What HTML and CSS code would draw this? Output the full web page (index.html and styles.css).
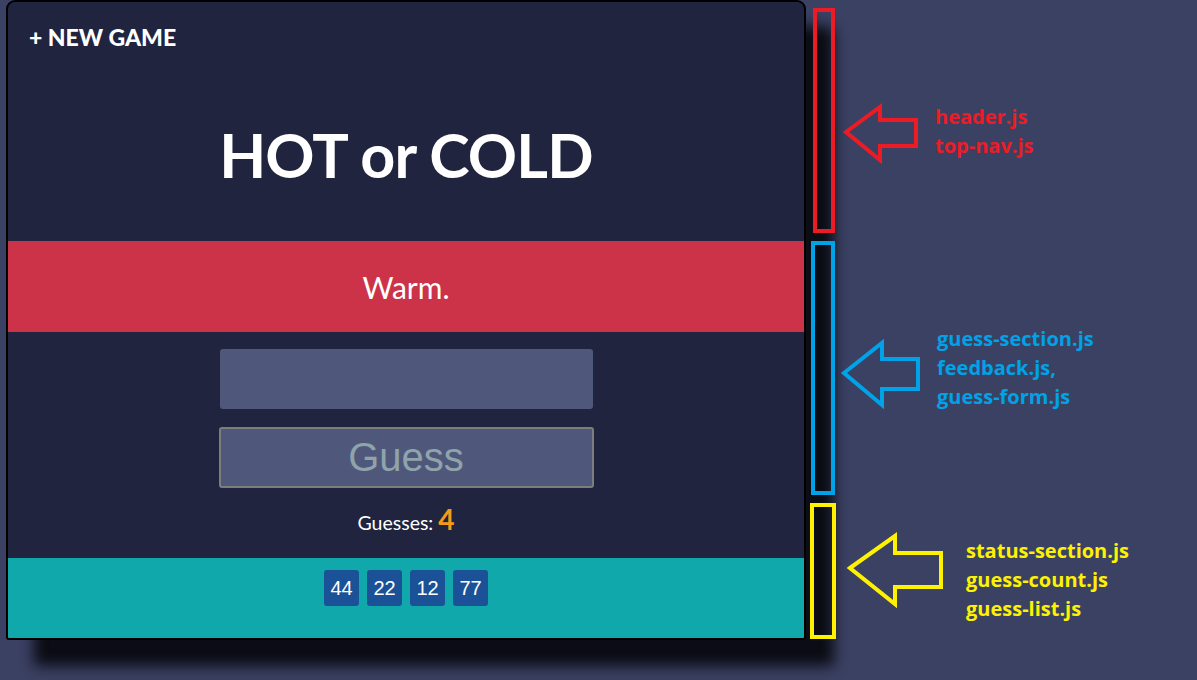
FILE: index.html
```html
<!DOCTYPE html>
<html>
<head>
<meta charset="utf-8">
<link rel="stylesheet" href="styles.css">
</head>
<body>
<div class="page">
  <main class="card">
    <header class="header">
      <nav class="top-nav"><a class="new-game">+ NEW GAME</a></nav>
      <h1 class="title">HOT or COLD</h1>
    </header>
    <section class="feedback">Warm.</section>
    <section class="guess-form">
      <input class="guess-input" type="text">
      <button class="guess-button">Guess</button>
      <p class="guess-count">Guesses: <span class="count-num">4</span></p>
    </section>
    <section class="status">
      <ul class="guess-list">
        <li class="guess-item">44</li>
        <li class="guess-item">22</li>
        <li class="guess-item">12</li>
        <li class="guess-item">77</li>
      </ul>
    </section>
  </main>

  <div class="note-box box-red"></div>
  <svg class="arrow arrow-red" width="80" height="62" viewBox="0 0 80 62"><polygon points="3,28 37,3 37,16 73,16 73,42 37,42 37,56" fill="none" stroke="#ed1c24" stroke-width="4" stroke-linejoin="miter"/></svg>
  <div class="note-text text-red">header.js<br>top-nav.js</div>

  <div class="note-box box-blue"></div>
  <svg class="arrow arrow-blue" width="84" height="70" viewBox="0 0 84 70"><polygon points="3,33 41,3 41,19 77,19 77,49 41,49 41,65" fill="none" stroke="#00a2e8" stroke-width="4"/></svg>
  <div class="note-text text-blue">guess-section.js<br>feedback.js,<br>guess-form.js</div>

  <div class="note-box box-yellow"></div>
  <svg class="arrow arrow-yellow" width="100" height="74" viewBox="0 0 100 74"><polygon points="3,35 48,3 48,20 94,20 94,54 48,54 48,71" fill="none" stroke="#fff200" stroke-width="4"/></svg>
  <div class="note-text text-yellow">status-section.js<br>guess-count.js<br>guess-list.js</div>
</div>
</body>
</html>
```

FILE: styles.css
```css
html, body {
  margin: 0;
  padding: 0;
  background: #3b4163;
  width: 1197px;
  height: 680px;
  overflow: hidden;
}

.page {
  position: relative;
  width: 1197px;
  height: 680px;
  padding-left: 6px;
  box-sizing: border-box;
}

.card {
  width: 800px;
  height: 640px;
  box-sizing: border-box;
  border: 2px solid #000;
  border-radius: 9px 9px 3px 3px;
  background: #20243e;
  box-shadow: 28px 26px 14px rgba(8, 10, 16, 0.95);
  display: flex;
  flex-direction: column;
  overflow: hidden;
  font-family: Lato, "Noto Sans", sans-serif;
  color: #fff;
}

.header {
  height: 239px;
  display: flex;
  flex-direction: column;
}

.top-nav {
  padding: 21px 0 0 21px;
}

.new-game {
  font-weight: 900;
  font-size: 23px;
  line-height: 28px;
  color: #fff;
}

.title {
  margin: 68px 0 0;
  text-align: center;
  font-weight: 700;
  font-size: 61px;
  line-height: 72px;
  letter-spacing: -0.8px;
}

.feedback {
  height: 91px;
  background: #cc3349;
  display: flex;
  align-items: center;
  justify-content: center;
  font-size: 30px;
}

.guess-form {
  height: 226px;
  display: flex;
  flex-direction: column;
  align-items: center;
  padding-top: 17px;
  box-sizing: border-box;
}

.guess-input {
  width: 373px;
  height: 60px;
  box-sizing: border-box;
  border: none;
  border-radius: 3px;
  background: #4f587a;
  margin: 0;
}

.guess-button {
  margin: 18px 0 0;
  width: 375px;
  height: 61px;
  box-sizing: border-box;
  border: 2px solid #7d7d7d;
  border-radius: 3px;
  background: #4f587a;
  color: #8fa3ab;
  font-family: "Liberation Sans", Arial, sans-serif;
  font-size: 40px;
  padding: 0;
}

.guess-count {
  margin: 17px 0 0;
  font-size: 19.5px;
  line-height: 28px;
  display: flex;
  align-items: baseline;
  gap: 5px;
}

.count-num {
  color: #f39a1b;
  font-size: 28px;
  font-weight: 700;
}

.status {
  flex: 1;
  background: #10a8ab;
  padding-top: 12px;
}

.guess-list {
  list-style: none;
  margin: 0;
  padding: 0;
  display: flex;
  justify-content: center;
  gap: 8px;
}

.guess-item {
  width: 35px;
  height: 36px;
  border-radius: 3px;
  background: #1b5196;
  color: #fff;
  font-family: "Liberation Sans", Arial, sans-serif;
  font-size: 20px;
  display: flex;
  align-items: center;
  justify-content: center;
}

/* annotations overlaid on the screenshot */
.note-box {
  position: absolute;
  box-sizing: border-box;
  border: 4px solid;
}
.box-red { left: 813px; top: 8px; width: 22px; height: 225px; border-color: #ed1c24; }
.box-blue { left: 811px; top: 241px; width: 24px; height: 254px; border-color: #00a2e8; }
.box-yellow { left: 810px; top: 503px; width: 26px; height: 136px; border-color: #fff200; }

.arrow { position: absolute; overflow: visible; }
.arrow-red { left: 843px; top: 104px; }
.arrow-blue { left: 841px; top: 340px; }
.arrow-yellow { left: 847px; top: 533px; }

.note-text {
  position: absolute;
  font-family: "Open Sans", "Noto Sans", sans-serif;
  font-weight: 700;
  font-size: 20px;
  line-height: 29px;
  letter-spacing: 0;
}
.text-red { left: 935px; top: 102px; color: #ed1c24; }
.text-blue { left: 937px; top: 324px; color: #00a2e8; }
.text-yellow { left: 966px; top: 536px; color: #fff200; }
```
